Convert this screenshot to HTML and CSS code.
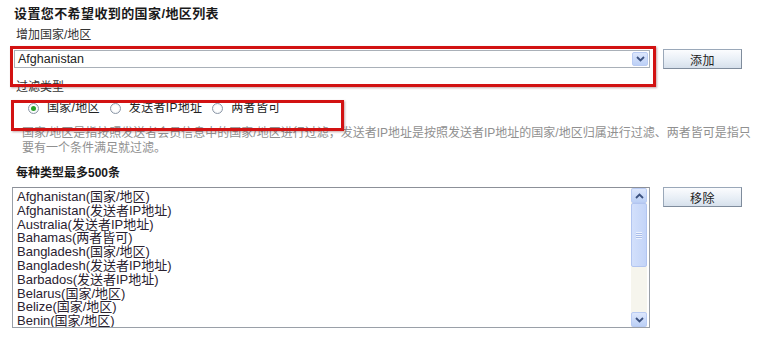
FILE: index.html
```html
<!DOCTYPE html>
<html lang="zh-CN">
<head>
<meta charset="utf-8">
<title>国家/地区过滤</title>
<link rel="stylesheet" href="styles.css">
</head>
<body>
<div class="page">
  <div class="title">设置您不希望收到的国家/地区列表</div>
  <div class="label label-add">增加国家/地区</div>
  <div class="row row-add">
    <div class="select">
      <span class="select-value">Afghanistan</span>
      <span class="drop-btn">
        <svg width="9" height="6" viewBox="0 0 9 6"><polyline points="1,1 4.5,4.5 8,1" fill="none" stroke="#3c5280" stroke-width="1.8"/></svg>
      </span>
    </div>
    <button class="btn">添加</button>
  </div>
  <div class="label label-type">过滤类型</div>
  <div class="radios">
    <label class="radio"><span class="dot checked"></span>国家/地区</label>
    <label class="radio"><span class="dot"></span>发送者IP地址</label>
    <label class="radio"><span class="dot"></span>两者皆可</label>
  </div>
  <div class="desc">国家/地区是指按照发送者会员信息中的国家/地区进行过滤，发送者IP地址是按照发送者IP地址的国家/地区归属进行过滤、两者皆可是指只<br>要有一个条件满足就过滤。</div>
  <div class="label-bold">每种类型最多500条</div>
  <div class="row row-list">
    <div class="listbox">
      <div class="items">
        <div>Afghanistan(国家/地区)</div>
        <div>Afghanistan(发送者IP地址)</div>
        <div>Australia(发送者IP地址)</div>
        <div>Bahamas(两者皆可)</div>
        <div>Bangladesh(国家/地区)</div>
        <div>Bangladesh(发送者IP地址)</div>
        <div>Barbados(发送者IP地址)</div>
        <div>Belarus(国家/地区)</div>
        <div>Belize(国家/地区)</div>
        <div>Benin(国家/地区)</div>
      </div>
      <div class="scrollbar">
        <span class="sb-btn">
          <svg width="9" height="6" viewBox="0 0 9 6"><polyline points="1,5 4.5,1.5 8,5" fill="none" stroke="#3c5280" stroke-width="1.8"/></svg>
        </span>
        <span class="sb-thumb"><span class="grip"></span></span>
        <span class="sb-track"></span>
        <span class="sb-btn">
          <svg width="9" height="6" viewBox="0 0 9 6"><polyline points="1,1 4.5,4.5 8,1" fill="none" stroke="#3c5280" stroke-width="1.8"/></svg>
        </span>
      </div>
    </div>
    <button class="btn">移除</button>
  </div>

  <div class="mark mark-select"></div>
  <div class="mark mark-radio"></div>
</div>
</body>
</html>
```

FILE: styles.css
```css
html, body {
  margin: 0;
  padding: 0;
  background: #ffffff;
}
body {
  font-family: "Liberation Sans", "Noto Sans CJK SC", sans-serif;
  font-size: 12px;
  color: #222;
  overflow: hidden;
}
.page {
  position: relative;
  width: 763px;
  height: 338px;
}
.title {
  margin: 6px 0 0 14px;
  height: 16px;
  line-height: 16px;
  font-size: 13px;
  font-weight: bold;
  letter-spacing: 0.4px;
  color: #1a1a1a;
}
.label {
  margin-left: 16px;
  height: 16px;
  line-height: 16px;
  color: #333;
}
.label-add { margin-top: 5px; }
.label-type { margin-top: 10px; }

.row {
  display: flex;
  margin-left: 14px;
}
.row-add {
  margin-top: 6px;
  height: 20px;
  align-items: center;
}
.select {
  box-sizing: border-box;
  width: 636px;
  height: 18px;
  border: 1px solid #a9b0b8;
  background: #fff;
  display: flex;
  align-items: center;
  justify-content: space-between;
  padding: 0 1px 0 3px;
}
.select-value {
  font-size: 12.5px;
  color: #222;
}
.drop-btn {
  box-sizing: border-box;
  width: 16px;
  height: 14px;
  border: 1px solid #b9cbf3;
  border-radius: 2px;
  background: linear-gradient(#dde7fc, #bcd0f6);
  display: flex;
  align-items: center;
  justify-content: center;
}
.btn {
  box-sizing: border-box;
  margin-left: 13px;
  width: 79px;
  height: 20px;
  padding: 0;
  border: 1px solid #9aa8b9;
  border-right-color: #7f8c9c;
  border-bottom-color: #7f8c9c;
  background: linear-gradient(#fbfcfe, #e6edf5 60%, #d6e0eb);
  font-family: "Liberation Sans", "Noto Sans CJK SC", sans-serif;
  font-size: 12px;
  letter-spacing: 0.5px;
  color: #222;
}

.radios {
  margin-top: 5px;
  margin-left: 28px;
  height: 16px;
  display: flex;
  align-items: center;
}
.radio {
  display: flex;
  align-items: center;
  line-height: 16px;
  margin-right: 10px;
  letter-spacing: 0.3px;
  color: #222;
}
.dot {
  box-sizing: border-box;
  width: 11px;
  height: 11px;
  border: 1px solid #8b96a6;
  border-radius: 50%;
  background: radial-gradient(#ffffff 40%, #e8ecf0);
  margin-right: 8px;
  display: flex;
  align-items: center;
  justify-content: center;
}
.dot.checked::after {
  content: "";
  width: 5px;
  height: 5px;
  border-radius: 50%;
  background: #2aa02a;
}

.desc {
  margin: 10px 0 0 22px;
  line-height: 15px;
  color: #909090;
  white-space: nowrap;
}
.label-bold {
  margin: 9px 0 0 16px;
  height: 16px;
  line-height: 16px;
  font-weight: bold;
  color: #1a1a1a;
}

.row-list {
  margin-top: 6px;
  margin-left: 12px;
  align-items: flex-start;
}
.listbox {
  box-sizing: border-box;
  width: 638px;
  height: 141px;
  border: 1px solid #9aa0a8;
  border-top-color: #8c9098;
  background: #fff;
  display: flex;
}
.items {
  flex: 1;
  padding: 2px 0 0 4px;
  font-size: 13px;
  line-height: 13.8px;
  color: #2a2230;
  overflow: hidden;
}
.scrollbar {
  width: 16px;
  margin-right: 2px;
  display: flex;
  flex-direction: column;
  background: #f6f5ed;
}
.sb-btn {
  box-sizing: border-box;
  height: 15px;
  border: 1px solid #b9cbf3;
  border-radius: 2px;
  background: linear-gradient(#dde7fc, #bcd0f6);
  display: flex;
  align-items: center;
  justify-content: center;
}
.sb-thumb {
  box-sizing: border-box;
  height: 64px;
  border: 1px solid #b2c5f0;
  border-radius: 2px;
  background: linear-gradient(90deg, #d3e0fb, #c3d4f8);
  display: flex;
  align-items: center;
  justify-content: center;
}
.grip {
  width: 6px;
  height: 7px;
  background: repeating-linear-gradient(#eef3fe 0 1px, #a9bde9 1px 2px);
}
.sb-track {
  flex: 1;
}

.mark {
  position: absolute;
  box-sizing: border-box;
  border: 3px solid #d21212;
  box-shadow: 1px 1px 2px rgba(90, 0, 0, 0.35);
}
.mark-select {
  left: 10px;
  top: 40px;
  width: 646px;
  height: 41px;
}
.mark-radio {
  left: 11px;
  top: 94px;
  width: 333px;
  height: 31px;
}
```
